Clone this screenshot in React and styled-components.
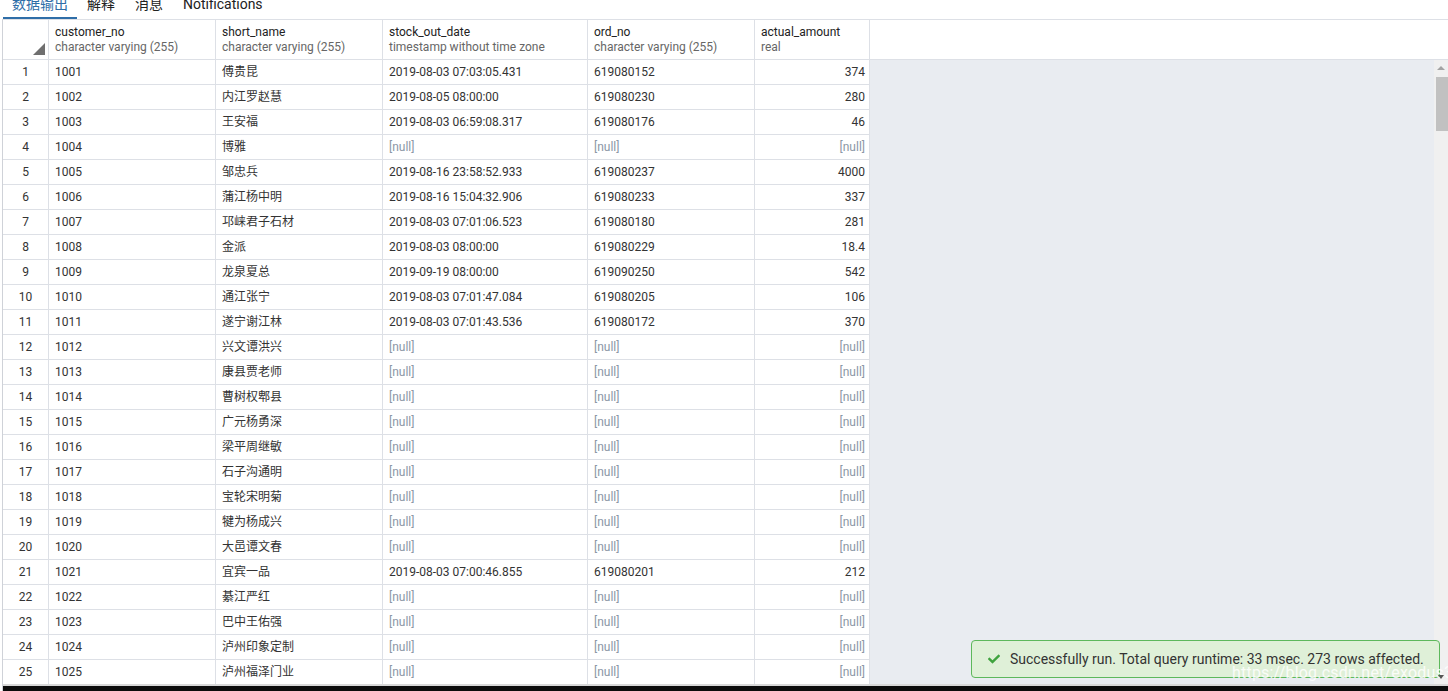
import React from 'react';
import styled, { createGlobalStyle } from 'styled-components';
import { FaCheck } from 'react-icons/fa';

const GlobalStyle = createGlobalStyle`
  html, body {
    margin: 0;
    padding: 0;
    background: #ffffff;
  }
  body {
    font-family: Roboto, "Noto Sans CJK SC", "Noto Sans", sans-serif;
    font-size: 12px;
    color: #222;
  }
`;

const COLS = '46px 167px 167px 205px 167px 115px';

const Page = styled.div`
  position: relative;
  width: 1448px;
  height: 691px;
  overflow: hidden;
  display: flex;
  flex-direction: column;
  background: #fff;
`;

const TabBar = styled.div`
  height: 19px;
  flex: none;
  overflow: hidden;
  display: flex;
  padding-left: 3px;
`;

const Tab = styled.div`
  margin-top: -7px;
  height: 26px;
  padding: 0 ${(p) => (p.$first ? '9px' : '10px')};
  font-size: 14px;
  line-height: 22px;
  color: ${(p) => (p.$active ? '#2f6ea8' : '#222')};
  border-bottom: 2px solid ${(p) => (p.$active ? '#2f6ea8' : 'transparent')};
  box-sizing: border-box;
`;

const Grid = styled.div`
  flex: 1;
  display: flex;
  flex-direction: column;
  min-height: 0;
  border-left: 1px solid #cfd2d8;
  margin-left: 2px;
  border-top: 1px solid #dde0e6;
`;

const HeaderRow = styled.div`
  display: flex;
  flex: none;
  height: 40px;
  box-sizing: border-box;
  border-bottom: 1px solid #dde0e6;
  background: #fff;
`;

const HeaderCells = styled.div`
  display: grid;
  grid-template-columns: ${COLS};
`;

const HeadCell = styled.div`
  position: relative;
  border-right: 1px solid #dde0e6;
  padding: 5px 6px 0 6px;
  line-height: 15px;
  white-space: nowrap;
  overflow: hidden;
`;

const ColName = styled.div`
  color: #222;
`;

const ColType = styled.div`
  color: #666;
`;

const Corner = styled.div`
  position: absolute;
  right: 3px;
  bottom: 4px;
  width: 0;
  height: 0;
  border-left: 12px solid transparent;
  border-bottom: 12px solid #6f6f6f;
`;

const Body = styled.div`
  flex: 1;
  display: flex;
  min-height: 0;
`;

const Rows = styled.div`
  display: flex;
  flex-direction: column;
  background: #fff;
`;

const Row = styled.div`
  display: grid;
  grid-template-columns: ${COLS};
  height: 25px;
  flex: none;
  border-bottom: 1px solid #dde0e6;
  box-sizing: border-box;
`;

const Cell = styled.div`
  border-right: 1px solid #dde0e6;
  padding: 0 ${(p) => (p.$right ? '4px' : '6px')};
  line-height: 24px;
  text-align: ${(p) => (p.$center ? 'center' : p.$right ? 'right' : 'left')};
  color: ${(p) => (p.$null ? '#8b97a6' : '#333')};
  white-space: nowrap;
  overflow: hidden;
`;

const Filler = styled.div`
  flex: 1;
  background: #e9ecf1;
`;

const Scrollbar = styled.div`
  width: 14px;
  background: #f0f0f0;
  display: flex;
  flex-direction: column;
  align-items: center;
`;

const ArrowUp = styled.div`
  margin-top: 6px;
  width: 0;
  height: 0;
  border-left: 4px solid transparent;
  border-right: 4px solid transparent;
  border-bottom: 4px solid #a3a3a3;
`;

const Thumb = styled.div`
  margin-top: 7px;
  margin-left: 2px;
  width: 13px;
  height: 54px;
  background: #c1c1c1;
`;

const BottomBar = styled.div`
  height: 5px;
  flex: none;
  background: #0c0c0c;
  border-top: 2px solid #d8d8d8;
`;

const Toast = styled.div`
  position: absolute;
  left: 971px;
  top: 640px;
  width: 469px;
  height: 38px;
  box-sizing: border-box;
  border: 1px solid #5db85c;
  border-radius: 4px;
  background: #dff0d8;
  display: flex;
  align-items: center;
  padding-left: 16px;
  gap: 10px;
  font-size: 14px;
  color: #333;
`;

const CheckIcon = styled(FaCheck)`
  color: #3fa33f;
  font-size: 12px;
`;

const Watermark = styled.div`
  position: absolute;
  left: 1232px;
  top: 663px;
  font-size: 16px;
  color: rgba(255, 255, 255, 0.85);
  letter-spacing: 0.2px;
  pointer-events: none;
`;

const ArrowDown = styled.div`
  position: absolute;
  left: 1438px;
  top: 675px;
  width: 0;
  height: 0;
  border-left: 3px solid transparent;
  border-right: 3px solid transparent;
  border-top: 4px solid #555;
`;

const columns = [
  ['customer_no', 'character varying (255)'],
  ['short_name', 'character varying (255)'],
  ['stock_out_date', 'timestamp without time zone'],
  ['ord_no', 'character varying (255)'],
  ['actual_amount', 'real'],
];

const data = [
  ['1001', '傅贵昆', '2019-08-03 07:03:05.431', '619080152', '374'],
  ['1002', '内江罗赵慧', '2019-08-05 08:00:00', '619080230', '280'],
  ['1003', '王安福', '2019-08-03 06:59:08.317', '619080176', '46'],
  ['1004', '博雅', null, null, null],
  ['1005', '邹忠兵', '2019-08-16 23:58:52.933', '619080237', '4000'],
  ['1006', '蒲江杨中明', '2019-08-16 15:04:32.906', '619080233', '337'],
  ['1007', '邛崃君子石材', '2019-08-03 07:01:06.523', '619080180', '281'],
  ['1008', '金派', '2019-08-03 08:00:00', '619080229', '18.4'],
  ['1009', '龙泉夏总', '2019-09-19 08:00:00', '619090250', '542'],
  ['1010', '通江张宁', '2019-08-03 07:01:47.084', '619080205', '106'],
  ['1011', '遂宁谢江林', '2019-08-03 07:01:43.536', '619080172', '370'],
  ['1012', '兴文谭洪兴', null, null, null],
  ['1013', '康县贾老师', null, null, null],
  ['1014', '曹树权郫县', null, null, null],
  ['1015', '广元杨勇深', null, null, null],
  ['1016', '梁平周继敏', null, null, null],
  ['1017', '石子沟通明', null, null, null],
  ['1018', '宝轮宋明菊', null, null, null],
  ['1019', '犍为杨成兴', null, null, null],
  ['1020', '大邑谭文春', null, null, null],
  ['1021', '宜宾一品', '2019-08-03 07:00:46.855', '619080201', '212'],
  ['1022', '綦江严红', null, null, null],
  ['1023', '巴中王佑强', null, null, null],
  ['1024', '泸州印象定制', null, null, null],
  ['1025', '泸州福泽门业', null, null, null],
];

const Value = ({ v, right }) => (
  <Cell $right={right} $null={v === null}>
    {v === null ? '[null]' : v}
  </Cell>
);

export default function App() {
  return (
    <Page>
      <GlobalStyle />
      <TabBar>
        <Tab $active $first>数据输出</Tab>
        <Tab>解释</Tab>
        <Tab>消息</Tab>
        <Tab>Notifications</Tab>
      </TabBar>
      <Grid>
        <HeaderRow>
          <HeaderCells>
            <HeadCell>
              <Corner />
            </HeadCell>
            {columns.map(([name, type]) => (
              <HeadCell key={name}>
                <ColName>{name}</ColName>
                <ColType>{type}</ColType>
              </HeadCell>
            ))}
          </HeaderCells>
        </HeaderRow>
        <Body>
          <Rows>
            {data.map((r, i) => (
              <Row key={r[0]}>
                <Cell $center>{i + 1}</Cell>
                <Value v={r[0]} />
                <Value v={r[1]} />
                <Value v={r[2]} />
                <Value v={r[3]} />
                <Value v={r[4]} right />
              </Row>
            ))}
          </Rows>
          <Filler />
          <Scrollbar>
            <ArrowUp />
            <Thumb />
          </Scrollbar>
        </Body>
        <BottomBar />
      </Grid>
      <Toast>
        <CheckIcon />
        <span>Successfully run. Total query runtime: 33 msec. 273 rows affected.</span>
      </Toast>
      <Watermark>https://blog.csdn.net/exodus3</Watermark>
      <ArrowDown />
    </Page>
  );
}
